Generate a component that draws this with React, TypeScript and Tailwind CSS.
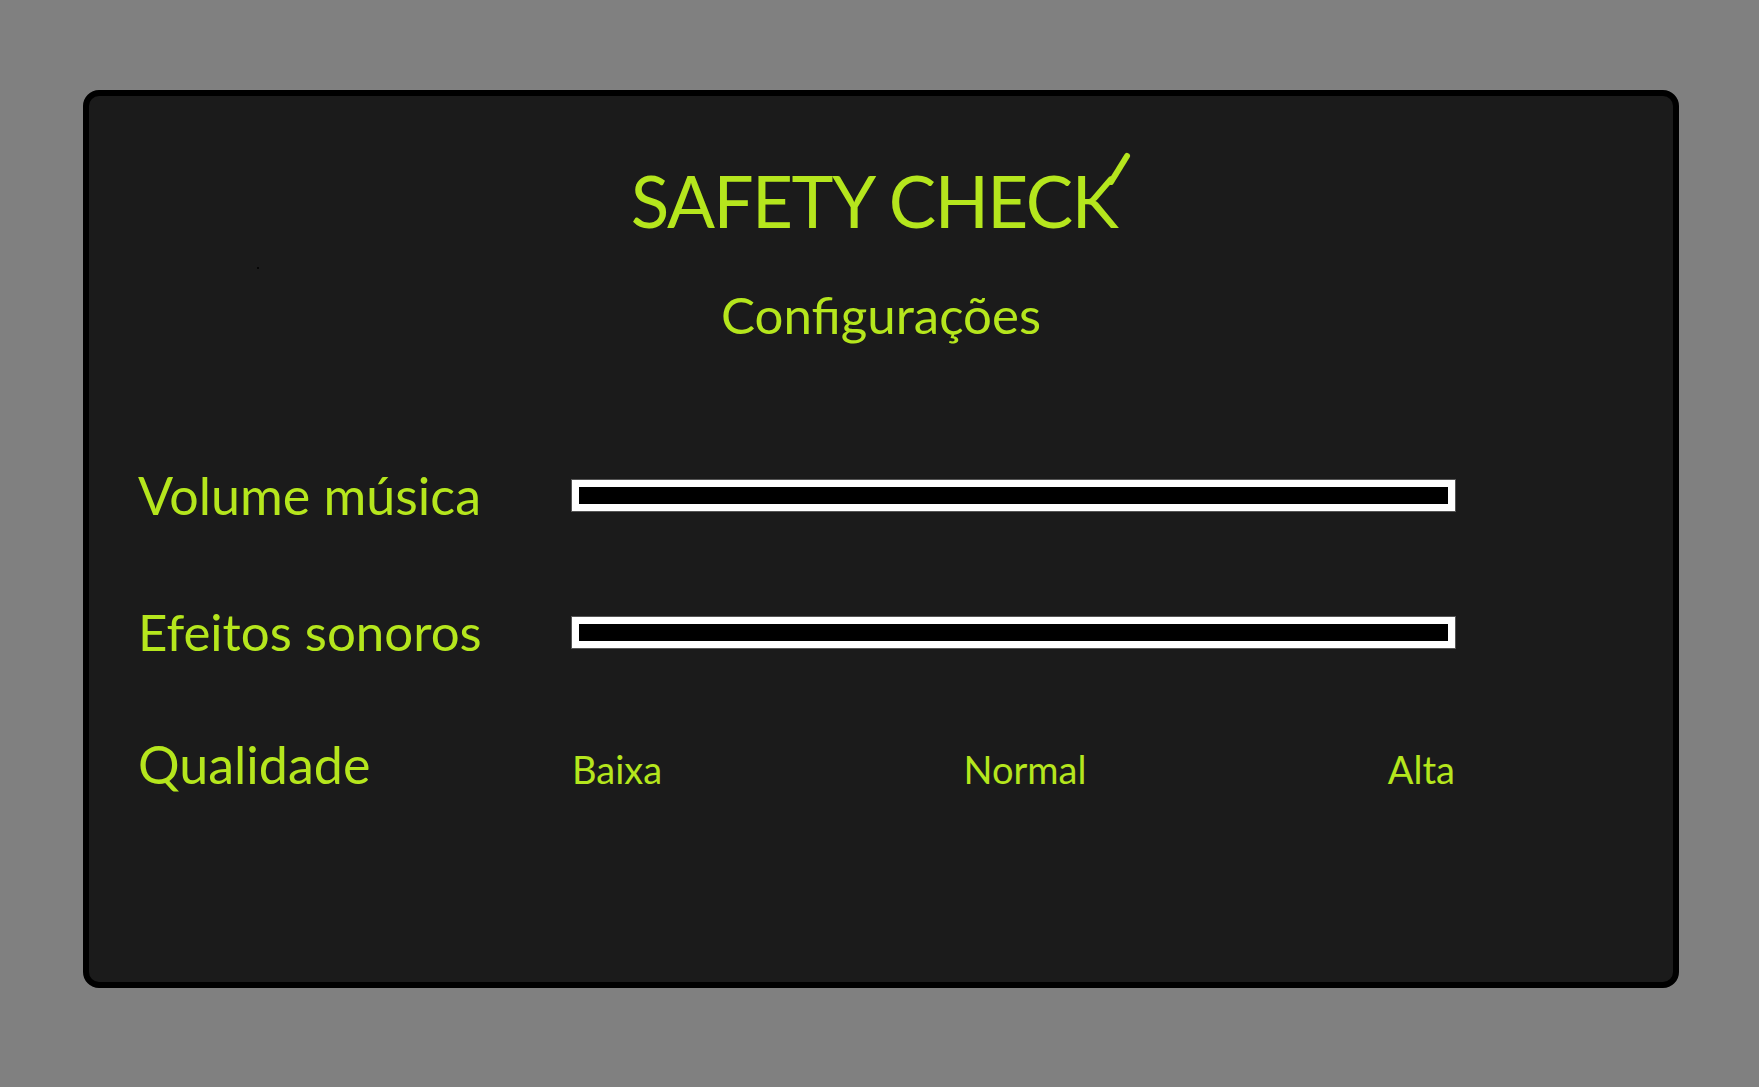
import React from 'react';

const GREEN = 'text-[#b5e61d]';

const Bar: React.FC = () => (
  <div className="h-[31px] w-[883px] border-[7px] border-white bg-black outline outline-1 outline-[#555]" />
);

const App: React.FC = () => {
  return (
    <div className="min-h-screen w-full bg-[#808080] pt-[90px] pl-[83px]" style={{ fontFamily: 'Lato, "Open Sans", sans-serif' }}>
      <div className="relative h-[898px] w-[1596px] rounded-[16px] border-[6px] border-black bg-[#1b1b1b]">
        {/* stray pixel from the mockup */}
        <div className="absolute left-[168px] top-[171px] h-[2px] w-[2px] rounded-full bg-black" />

        <div className="flex flex-col items-center pt-[69px]">
          <h1 className={`pr-[14px] text-[71px] leading-none tracking-[-1.5px] font-normal ${GREEN}`}>
            SAFETY CHEC
            <span className="relative inline-block">
              K
              <svg className="absolute right-[-18px] top-[-14px] h-[34px] w-[26px]" viewBox="0 0 26 34">
                <line x1="2" y1="31" x2="18" y2="5" stroke="#b5e61d" strokeWidth="6" strokeLinecap="round" />
              </svg>
            </span>
          </h1>
          <h2 className={`mt-[53px] text-[51px] leading-none ${GREEN}`}>Configurações</h2>
        </div>

        <div className="mt-[131px] pl-[49px] flex flex-col">
          <div className="flex items-center h-[49px]">
            <span className={`w-[434px] text-[52px] leading-none -mt-[2px] ${GREEN}`}>Volume música</span>
            <Bar />
          </div>
          <div className="mt-[88px] flex items-center h-[49px]">
            <span className={`w-[434px] text-[51px] leading-none -mt-[2px] ${GREEN}`}>Efeitos sonoros</span>
            <Bar />
          </div>
          <div className="mt-[81px] flex items-baseline">
            <span className={`w-[434px] text-[52px] leading-none ${GREEN}`}>Qualidade</span>
            <div className={`flex w-[883px] justify-between text-[38px] leading-none ${GREEN}`}>
              <span>Baixa</span>
              <span>Normal</span>
              <span>Alta</span>
            </div>
          </div>
        </div>
      </div>
    </div>
  );
};

export default App;
